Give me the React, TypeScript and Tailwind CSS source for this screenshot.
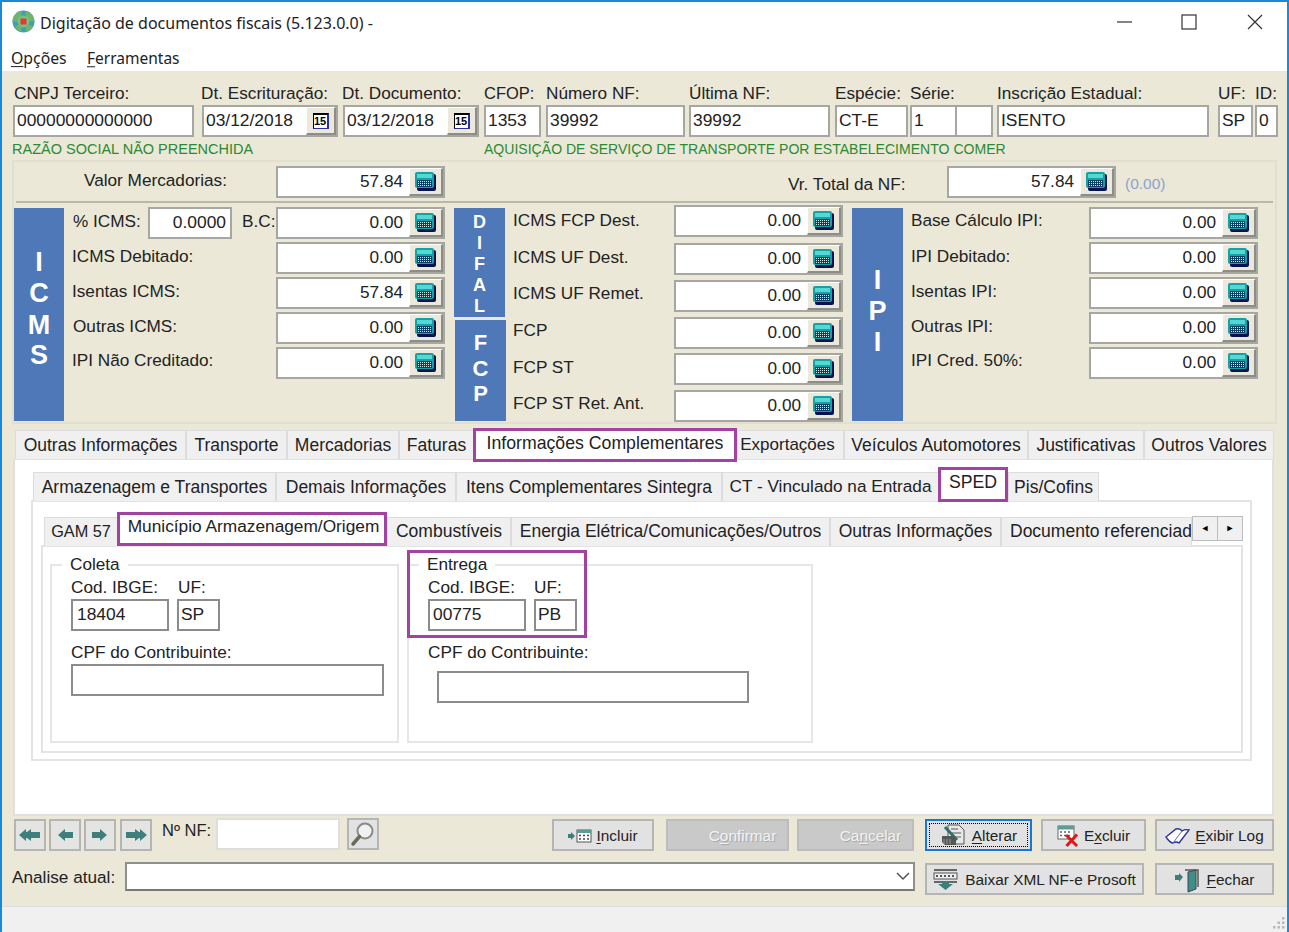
import React from "react";

const Lbl = ({ c, children }: { c: string; children: React.ReactNode }) => (
  <span className={"absolute mt-[2px] -translate-y-1/2 whitespace-nowrap leading-none " + c}>{children}</span>
);

const Box = ({ c, children }: { c: string; children?: React.ReactNode }) => (
  <div className={"absolute h-[32px] bg-white border-2 border-[#a6a6a2] flex items-center px-[2px] pb-[2px] text-[17.4px] text-[#222] whitespace-nowrap overflow-hidden " + c}>{children}</div>
);

const CalcIcon = () => (
  <svg width="21" height="19" viewBox="0 0 21 19">
    <rect x="2" y="2" width="19" height="17" rx="2" fill="#06124f" />
    <rect x="0" y="0" width="19" height="16" rx="2" fill="#12a3a3" />
    <rect x="2" y="2" width="15" height="4" fill="#58d6d6" />
    <rect x="2" y="8" width="15" height="7" fill="#0c3f66" />
    <path d="M3 9.500h13M3 11.500h13M3 13.500h13" stroke="#d5e6e6" strokeWidth="1" strokeDasharray="1 1" />
  </svg>
);

const Money = ({ c, v }: { c: string; v: string }) => (
  <div className={"absolute h-[32px] w-[169px] bg-white border-2 border-[#a6a6a2] text-[17.2px] text-[#222] " + c}>
    <span className="absolute right-[40px] top-[14px] -translate-y-1/2 leading-none">{v}</span>
    <div className="absolute right-0 top-0 w-[34px] h-[28px] bg-[#ece9dc] border-t border-l border-white border-b-2 border-r-2 border-b-[#8d8d88] border-r-[#8d8d88] flex items-center justify-center">
      <CalcIcon />
    </div>
  </div>
);

const DateBox = ({ c, v }: { c: string; v: string }) => (
  <div className={"absolute h-[32px] w-[136px] bg-white border-2 border-[#a6a6a2] flex items-center px-[2px] pb-[2px] text-[17.4px] text-[#222] " + c}>
    {v}
    <div className="absolute right-0 top-0 w-[30px] h-[28px] bg-[#ece9dc] border-t border-l border-white border-b-2 border-r-2 border-b-[#8d8d88] border-r-[#8d8d88] flex items-center justify-center">
      <span className="w-[16px] h-[16px] bg-white border-t-2 border-l border-black border-r-2 border-r-[#2b2f9a] border-b border-b-[#2b2f9a] text-[11px] font-bold leading-[13px] text-center text-black">15</span>
    </div>
  </div>
);

const Tab = ({ c, children }: { c: string; children: React.ReactNode }) => (
  <div className={"absolute flex items-center justify-center bg-[#f0f0f0] border border-[#dcdcdc] border-b-0 text-[17.5px] text-[#222] whitespace-nowrap overflow-hidden " + c}>{children}</div>
);

const PTab = ({ c, children }: { c: string; children: React.ReactNode }) => (
  <div className={"absolute z-10 flex items-center justify-center pb-[4px] bg-white border-[3px] border-[#a1439f] text-[17.7px] text-[#222] whitespace-nowrap " + c}>{children}</div>
);

const Btn = ({ c, children }: { c: string; children: React.ReactNode }) => (
  <div className={"absolute h-[32px] flex items-center justify-center gap-[4px] bg-[#e2e2e2] border-2 border-[#b5b5b5] text-[15.4px] text-[#222] whitespace-nowrap " + c}>{children}</div>
);

const Arrow = ({ dir, dbl }: { dir: "l" | "r"; dbl?: boolean }) => (
  <svg width="24" height="16" viewBox="0 0 24 16" className={dir === "r" ? "-scale-x-100" : ""}>
    {dbl ? (
      <path d="M1 8 8 2v3h1l4-3v3h9v6h-9v3L9 11H8v3z" fill="#3c7f7d" />
    ) : (
      <path d="M5 8 12 2v3h8v6h-8v3z" fill="#3c7f7d" />
    )}
  </svg>
);

const Blue = ({ c, children }: { c: string; children: React.ReactNode }) => (
  <div className={"absolute bg-[#4e78b8] text-white font-bold " + c}>{children}</div>
);

const Letter = ({ c, children }: { c: string; children: React.ReactNode }) => (
  <span className={"absolute left-1/2 -translate-x-1/2 -translate-y-1/2 leading-none " + c}>{children}</span>
);

const U = ({ children }: { children: React.ReactNode }) => <span className="underline underline-offset-2">{children}</span>;

export default function App() {
  return (
    <div className="relative w-[1289px] h-[932px] overflow-hidden bg-white [font-family:Liberation_Sans,Arial,sans-serif] text-[17.2px] text-[#222]">
      {/* title bar */}
      <svg className="absolute left-[12px] top-[10px]" width="23" height="23" viewBox="0 0 23 23">
        <circle cx="11.500" cy="11.500" r="11" fill="#3f9fb5" />
        <path d="M11.500 .5A11 11 0 0 0 .5 11.500h6l3-6V.7zM13.500 .8v5l4 5.500h5A11 11 0 0 0 13.500 .8zM6 15l-3 2a11 11 0 0 0 6 5l1-6zM17 15l-3 2v5a11 11 0 0 0 7-6z" fill="#6fb56f" />
        <circle cx="11.500" cy="11.500" r="6" fill="#7cc07c" />
        <rect x="8.500" y="8.500" width="6" height="6" fill="#e23a3a" />
      </svg>
      <Lbl c="left-[40px] top-[21px] text-[16px] [font-family:Noto_Sans,sans-serif] text-[#222]">Digitação de documentos fiscais (5.123.0.0) -</Lbl>
      <svg className="absolute left-[1116px] top-[14px]" width="150" height="16" viewBox="0 0 150 16" fill="none" stroke="#333" strokeWidth="1.2">
        <path d="M1 8h15" />
        <rect x="66" y="1" width="14" height="14" />
        <path d="M132 1l14 14M146 1l-14 14" />
      </svg>
      <Lbl c="left-[11px] top-[57px] text-[15.800px] [font-family:Noto_Sans,sans-serif]"><U>O</U>pções</Lbl>
      <Lbl c="left-[87px] top-[57px] text-[15.500px] [font-family:Noto_Sans,sans-serif]"><U>F</U>erramentas</Lbl>

      {/* main beige */}
      <div className="absolute left-0 top-[71px] w-full h-[835px] bg-[#ebe8d8]" />
      <div className="absolute left-0 top-[906px] w-full h-[26px] bg-[#f0f0f0] border-t border-[#dedede]" />

      {/* window border */}
      <div className="absolute left-0 top-0 w-full h-[2px] bg-[#1b8ad6] z-20" />
      <div className="absolute left-0 top-0 w-[2px] h-full bg-[#1b8ad6] z-20" />
      <div className="absolute right-0 top-0 w-[2px] h-full bg-[#1b8ad6] z-20" />

      {/* header labels */}
      <Lbl c="left-[14px] top-[92px]">CNPJ Terceiro:</Lbl>
      <Lbl c="left-[201px] top-[92px]">Dt. Escrituração:</Lbl>
      <Lbl c="left-[342px] top-[92px]">Dt. Documento:</Lbl>
      <Lbl c="left-[484px] top-[91px] !text-[16.500px]">CFOP:</Lbl>
      <Lbl c="left-[546px] top-[92px]">Número NF:</Lbl>
      <Lbl c="left-[689px] top-[92px]">Última NF:</Lbl>
      <Lbl c="left-[835px] top-[92px]">Espécie:</Lbl>
      <Lbl c="left-[910px] top-[92px]">Série:</Lbl>
      <Lbl c="left-[997px] top-[92px]">Inscrição Estadual:</Lbl>
      <Lbl c="left-[1218px] top-[92px]">UF:</Lbl>
      <Lbl c="left-[1255px] top-[92px]">ID:</Lbl>

      <Box c="left-[13px] top-[105px] w-[181px]">00000000000000</Box>
      <DateBox c="left-[202px] top-[105px]" v="03/12/2018" />
      <DateBox c="left-[343px] top-[105px]" v="03/12/2018" />
      <Box c="left-[484px] top-[105px] w-[57px]">1353</Box>
      <Box c="left-[546px] top-[105px] w-[139px]">39992</Box>
      <Box c="left-[689px] top-[105px] w-[141px]">39992</Box>
      <Box c="left-[835px] top-[105px] w-[73px]">CT-E</Box>
      <Box c="left-[910px] top-[105px] w-[47px]">1</Box>
      <Box c="left-[955px] top-[105px] w-[38px]"></Box>
      <Box c="left-[997px] top-[105px] w-[212px]">ISENTO</Box>
      <Box c="left-[1218px] top-[105px] w-[35px]">SP</Box>
      <Box c="left-[1255px] top-[105px] w-[23px]">0</Box>

      <Lbl c="left-[12px] top-[147px] text-[14.500px] text-[#2c8a34]">RAZÃO SOCIAL NÃO PREENCHIDA</Lbl>
      <Lbl c="left-[484px] top-[147px] text-[14.050px] text-[#2c8a34]">AQUISIÇÃO DE SERVIÇO DE TRANSPORTE POR ESTABELECIMENTO COMER</Lbl>

      {/* values panel */}
      <div className="absolute left-[12px] top-[160px] w-[1265px] h-[264px] border-2 border-[#e2dfd0]" />
      <div className="absolute left-[16px] top-[201px] w-[1257px] h-[2px] bg-[#b9b8ae]" />
      <Lbl c="left-[84px] top-[179px]">Valor Mercadorias:</Lbl>
      <Money c="left-[276px] top-[166px]" v="57.84" />
      <Lbl c="left-[788px] top-[183px]">Vr. Total da NF:</Lbl>
      <Money c="left-[947px] top-[166px]" v="57.84" />
      <Lbl c="left-[1125px] top-[182px] text-[15.500px] text-[#8ba2d0]">(0.00)</Lbl>

      <Blue c="left-[14px] top-[208px] w-[50px] h-[213px] text-[27px]">
        <Letter c="top-[54px]">I</Letter>
        <Letter c="top-[85px]">C</Letter>
        <Letter c="top-[117px]">M</Letter>
        <Letter c="top-[147px]">S</Letter>
      </Blue>
      <Lbl c="left-[73px] top-[220px]">% ICMS:</Lbl>
      <Box c="left-[148px] top-[207px] w-[84px] justify-end pr-[4px]">0.0000</Box>
      <Lbl c="left-[242px] top-[220px]">B.C:</Lbl>
      <Money c="left-[276px] top-[207px]" v="0.00" />
      <Lbl c="left-[72px] top-[255px]">ICMS Debitado:</Lbl>
      <Money c="left-[276px] top-[242px]" v="0.00" />
      <Lbl c="left-[72px] top-[290px]">Isentas ICMS:</Lbl>
      <Money c="left-[276px] top-[277px]" v="57.84" />
      <Lbl c="left-[73px] top-[325px]">Outras ICMS:</Lbl>
      <Money c="left-[276px] top-[312px]" v="0.00" />
      <Lbl c="left-[72px] top-[359px]">IPI Não Creditado:</Lbl>
      <Money c="left-[276px] top-[347px]" v="0.00" />

      <Blue c="left-[454px] top-[208px] w-[51px] h-[109px] text-[18px]">
        <Letter c="top-[14px]">D</Letter>
        <Letter c="top-[35px]">I</Letter>
        <Letter c="top-[56px]">F</Letter>
        <Letter c="top-[77px]">A</Letter>
        <Letter c="top-[98px]">L</Letter>
      </Blue>
      <Blue c="left-[455px] top-[320px] w-[51px] h-[101px] text-[22px]">
        <Letter c="top-[23px]">F</Letter>
        <Letter c="top-[49px]">C</Letter>
        <Letter c="top-[74px]">P</Letter>
      </Blue>
      <Lbl c="left-[513px] top-[219px]">ICMS FCP Dest.</Lbl>
      <Money c="left-[674px] top-[205px]" v="0.00" />
      <Lbl c="left-[513px] top-[256px]">ICMS UF Dest.</Lbl>
      <Money c="left-[674px] top-[243px]" v="0.00" />
      <Lbl c="left-[513px] top-[292px]">ICMS UF Remet.</Lbl>
      <Money c="left-[674px] top-[280px]" v="0.00" />
      <Lbl c="left-[513px] top-[329px]">FCP</Lbl>
      <Money c="left-[674px] top-[317px]" v="0.00" />
      <Lbl c="left-[513px] top-[366px]">FCP ST</Lbl>
      <Money c="left-[674px] top-[353px]" v="0.00" />
      <Lbl c="left-[513px] top-[402px]">FCP ST Ret. Ant.</Lbl>
      <Money c="left-[674px] top-[390px]" v="0.00" />

      <Blue c="left-[852px] top-[208px] w-[51px] h-[213px] text-[27px]">
        <Letter c="top-[72px]">I</Letter>
        <Letter c="top-[103px]">P</Letter>
        <Letter c="top-[134px]">I</Letter>
      </Blue>
      <Lbl c="left-[911px] top-[219px]">Base Cálculo IPI:</Lbl>
      <Money c="left-[1089px] top-[207px]" v="0.00" />
      <Lbl c="left-[911px] top-[255px]">IPI Debitado:</Lbl>
      <Money c="left-[1089px] top-[242px]" v="0.00" />
      <Lbl c="left-[911px] top-[290px]">Isentas IPI:</Lbl>
      <Money c="left-[1089px] top-[277px]" v="0.00" />
      <Lbl c="left-[911px] top-[325px]">Outras IPI:</Lbl>
      <Money c="left-[1089px] top-[312px]" v="0.00" />
      <Lbl c="left-[911px] top-[359px]">IPI Cred. 50%:</Lbl>
      <Money c="left-[1089px] top-[347px]" v="0.00" />

      {/* level 1 tabs */}
      <div className="absolute left-[13px] top-[458px] w-[1261px] h-[358px] bg-white border-2 border-[#e0e0e0]" />
      <Tab c="left-[15px] top-[430px] w-[171px] h-[29px]">Outras Informações</Tab>
      <Tab c="left-[186px] top-[430px] w-[101px] h-[29px]">Transporte</Tab>
      <Tab c="left-[287px] top-[430px] w-[112px] h-[29px]">Mercadorias</Tab>
      <Tab c="left-[399px] top-[430px] w-[75px] h-[29px]">Faturas</Tab>
      <PTab c="left-[473px] top-[428px] w-[264px] h-[34px]">Informações Complementares</PTab>
      <Tab c="left-[737px] top-[430px] w-[107px] h-[29px] !text-[17px] pr-[6px]">Exportações</Tab>
      <Tab c="left-[844px] top-[430px] w-[184px] h-[29px]">Veículos Automotores</Tab>
      <Tab c="left-[1028px] top-[430px] w-[116px] h-[29px]">Justificativas</Tab>
      <Tab c="left-[1144px] top-[430px] w-[130px] h-[29px]">Outros Valores</Tab>

      {/* level 2 tabs */}
      <div className="absolute left-[31px] top-[500px] w-[1221px] h-[261px] bg-white border-2 border-[#e4e4e4]" />
      <Tab c="left-[33px] top-[472px] w-[243px] h-[29px]">Armazenagem e Transportes</Tab>
      <Tab c="left-[276px] top-[472px] w-[180px] h-[29px]">Demais Informações</Tab>
      <Tab c="left-[456px] top-[472px] w-[266px] h-[29px]">Itens Complementares Sintegra</Tab>
      <Tab c="left-[722px] top-[472px] w-[217px] h-[29px] !text-[17.200px]">CT - Vinculado na Entrada</Tab>
      <PTab c="left-[938px] top-[467px] w-[70px] h-[35px]">SPED</PTab>
      <Tab c="left-[1008px] top-[472px] w-[91px] h-[29px]">Pis/Cofins</Tab>

      {/* level 3 tabs */}
      <div className="absolute left-[41px] top-[545px] w-[1202px] h-[208px] bg-white border-2 border-[#e4e4e4]" />
      <Tab c="left-[44px] top-[517px] w-[74px] h-[29px] pb-[2px] !text-[16.300px]">GAM 57</Tab>
      <PTab c="left-[117px] top-[512px] w-[270px] h-[34px] !text-[17.300px] pl-[3px]">Município Armazenagem/Origem</PTab>
      <Tab c="left-[387px] top-[517px] w-[124px] h-[29px] pb-[2px]">Combustíveis</Tab>
      <Tab c="left-[511px] top-[517px] w-[319px] h-[29px] pb-[2px]">Energia Elétrica/Comunicações/Outros</Tab>
      <Tab c="left-[830px] top-[517px] w-[171px] h-[29px] pb-[2px]">Outras Informações</Tab>
      <Tab c="left-[1001px] top-[517px] w-[191px] h-[29px] pb-[2px] !justify-start pl-[8px]">Documento referenciad</Tab>
      <div className="absolute left-[1192px] top-[516px] w-[26px] h-[25px] bg-[#f0f0f0] border border-[#bdbdbd] flex items-center justify-center text-[9px] text-black">◄</div>
      <div className="absolute left-[1217px] top-[516px] w-[26px] h-[25px] bg-[#f0f0f0] border border-[#bdbdbd] flex items-center justify-center text-[9px] text-black">►</div>

      {/* Coleta */}
      <div className="absolute left-[50px] top-[564px] w-[349px] h-[179px] border-2 border-[#e6e6e6]" />
      <Lbl c="left-[62px] top-[563px] px-[8px] bg-white">Coleta</Lbl>
      <Lbl c="left-[71px] top-[586px]">Cod. IBGE:</Lbl>
      <Lbl c="left-[178px] top-[586px]">UF:</Lbl>
      <Box c="left-[71px] top-[599px] w-[98px] !border-[#8c8c8c] pl-[4px]">18404</Box>
      <Box c="left-[177px] top-[599px] w-[43px] !border-[#8c8c8c]">SP</Box>
      <Lbl c="left-[71px] top-[651px]">CPF do Contribuinte:</Lbl>
      <Box c="left-[71px] top-[664px] w-[313px] !border-[#8c8c8c]" />

      {/* Entrega */}
      <div className="absolute left-[407px] top-[564px] w-[406px] h-[179px] border-2 border-[#e6e6e6]" />
      <Lbl c="left-[419px] top-[563px] px-[8px] bg-white">Entrega</Lbl>
      <Lbl c="left-[428px] top-[586px]">Cod. IBGE:</Lbl>
      <Lbl c="left-[534px] top-[586px]">UF:</Lbl>
      <Box c="left-[428px] top-[599px] w-[98px] !border-[#8c8c8c] pl-[3px]">00775</Box>
      <Box c="left-[534px] top-[599px] w-[43px] !border-[#8c8c8c]">PB</Box>
      <Lbl c="left-[428px] top-[651px]">CPF do Contribuinte:</Lbl>
      <Box c="left-[437px] top-[671px] w-[312px] !border-[#8c8c8c]" />
      <div className="absolute left-[407px] top-[550px] w-[180px] h-[88px] border-[3px] border-[#a1439f] z-10" />

      {/* bottom bar */}
      <Btn c="left-[14px] top-[819px] w-[32px] !bg-[#e4e4e2]"><Arrow dir="l" dbl /></Btn>
      <Btn c="left-[49px] top-[819px] w-[32px] !bg-[#e4e4e2]"><Arrow dir="l" /></Btn>
      <Btn c="left-[84px] top-[819px] w-[32px] !bg-[#e4e4e2]"><Arrow dir="r" /></Btn>
      <Btn c="left-[120px] top-[819px] w-[32px] !bg-[#e4e4e2]"><Arrow dir="r" dbl /></Btn>
      <Lbl c="left-[162px] top-[828px] text-[16.500px]">Nº NF:</Lbl>
      <div className="absolute left-[216px] top-[818px] w-[124px] h-[32px] bg-white border-2 border-[#dededa]" />
      <Btn c="left-[347px] top-[818px] w-[32px]">
        <svg width="26" height="26" viewBox="0 0 26 26" fill="none">
          <circle cx="15" cy="10" r="7.500" fill="#f1f1f1" stroke="#8a8a8a" strokeWidth="2" />
          <path d="M9.500 15.500 3 23" stroke="#6b6b5c" strokeWidth="3.500" strokeLinecap="round" />
        </svg>
      </Btn>

      <Btn c="left-[552px] top-[819px] w-[102px] pt-[1px]">
        <svg width="24" height="16" viewBox="0 0 24 16">
          <path d="M7 8 3 4v2H0v4h3v2z" fill="#3c7f7d" />
          <rect x="9" y="2" width="14" height="12" fill="#fff" stroke="#555" />
          <rect x="9" y="2" width="14" height="3" fill="#5e9c9a" />
          <path d="M11 7.500h2M15 7.500h2M19 7.500h2M11 11h2M15 11h2M19 11h2" stroke="#444" strokeWidth="1.500" />
        </svg>
        <span><U>I</U>ncluir</span>
      </Btn>
      <Btn c="left-[666px] top-[819px] w-[123px] pt-[1px] !bg-[#c9c9c9] !border-[#bdbdbd] !text-[#f2f2f2] pl-[30px] [text-shadow:1px_1px_0_#aaa]"><span>C<U>o</U>nfirmar</span></Btn>
      <Btn c="left-[797px] top-[819px] w-[117px] pt-[1px] !bg-[#c9c9c9] !border-[#bdbdbd] !text-[#f2f2f2] pl-[30px] [text-shadow:1px_1px_0_#aaa]"><span>Ca<U>n</U>celar</span></Btn>

      <Btn c="left-[925px] top-[819px] w-[107px] pt-[1px] !border-[#1678d2]">
        <div className="absolute inset-[2px] border border-dotted border-black" />
        <svg width="26" height="24" viewBox="0 0 26 24">
          <path d="M8 1h11l5 5v14H8z" fill="#e8e8e8" stroke="#555" />
          <path d="M11 5h7M12 9h9M12 13h9" stroke="#888" strokeWidth="1.500" />
          <path d="M5 3l12 13" stroke="#2f6f6d" strokeWidth="3" />
          <path d="M2 12h11l3 3v6H5l-3-3z" fill="#555" />
          <path d="M4 15v5M7 15v5M10 15v5" stroke="#999" />
        </svg>
        <span className="ml-[2px]"><U>A</U>lterar</span>
      </Btn>
      <Btn c="left-[1041px] top-[819px] w-[105px] pt-[1px]">
        <svg width="23" height="24" viewBox="0 0 23 24">
          <rect x="1" y="2" width="16" height="13" fill="#fff" stroke="#666" />
          <rect x="1" y="2" width="16" height="3.500" fill="#5e9c9a" />
          <path d="M3 8h2M7 8h2M11 8h2M3 11.500h2M7 11.500h2M11 11.500h2" stroke="#666" strokeWidth="1.500" />
          <path d="M9 11l11 11M20 10.500 9.500 22" stroke="#e01818" strokeWidth="3" />
        </svg>
        <span>E<U>x</U>cluir</span>
      </Btn>
      <Btn c="left-[1155px] top-[819px] w-[119px] pt-[1px]">
        <svg width="26" height="20" viewBox="0 0 26 20">
          <path d="M1 11 11 3q4-1 6 2q3-2 7-1L14 17q-3-2-6 0q-3 0-7-6z" fill="#fff" stroke="#2a3490" strokeWidth="1.400" />
          <path d="M17 5 8 17" stroke="#6c6f9c" strokeWidth="1" />
        </svg>
        <span><U>E</U>xibir Log</span>
      </Btn>

      <Lbl c="left-[12px] top-[876px]">Analise atual:</Lbl>
      <div className="absolute left-[125px] top-[862px] w-[790px] h-[29px] bg-white border-2 border-[#8f8f8b] border-b-[#777]">
        <svg className="absolute right-[3px] top-[6px]" width="14" height="12" viewBox="0 0 14 12" fill="none" stroke="#555" strokeWidth="1.500">
          <path d="M1 3l6 6 6-6" />
        </svg>
      </div>
      <Btn c="left-[925px] top-[863px] w-[219px] pt-[1px]">
        <svg width="26" height="22" viewBox="0 0 26 22">
          <rect x="1" y="0" width="23" height="2" fill="#666" />
          <rect x="1" y="4" width="23" height="6" fill="#eee" stroke="#555" />
          <path d="M3 7h19" stroke="#555" strokeWidth="2" strokeDasharray="2 2" />
          <rect x="1" y="12" width="23" height="2" fill="#666" />
          <path d="M9 12h7v3h4l-7.500 6L5 15h4z" fill="#3c7f7d" />
        </svg>
        <span className="ml-[2px]">Baixar XML NF-e Prosoft</span>
      </Btn>
      <Btn c="left-[1155px] top-[863px] w-[119px] pt-[1px]">
        <svg width="28" height="26" viewBox="0 0 28 26">
          <path d="M8 10 4 6v2H0v5h4v2z" fill="#3c7f7d" />
          <path d="M10 3h13v17" fill="none" stroke="#555" strokeWidth="1.500" />
          <path d="M13 5l8-2v19l-8 3z" fill="#3c8f8b" stroke="#444" />
        </svg>
        <span><U>F</U>echar</span>
      </Btn>

      {/* size grip */}
      <svg className="absolute right-[3px] bottom-[2px]" width="14" height="14" viewBox="0 0 14 14" fill="#b8b8b8">
        <rect x="10" y="1" width="2.500" height="2.500" />
        <rect x="5.500" y="5.500" width="2.500" height="2.500" />
        <rect x="10" y="5.500" width="2.500" height="2.500" />
        <rect x="1" y="10" width="2.500" height="2.500" />
        <rect x="5.500" y="10" width="2.500" height="2.500" />
        <rect x="10" y="10" width="2.500" height="2.500" />
      </svg>
    </div>
  );
}
